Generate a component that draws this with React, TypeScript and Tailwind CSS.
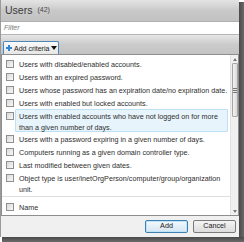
import React from "react";

type Row = { lines: string[]; active?: boolean };

const rows: Row[] = [
  { lines: ["Users with disabled/enabled accounts."] },
  { lines: ["Users with an expired password."] },
  { lines: ["Users whose password has an expiration date/no expiration date."] },
  { lines: ["Users with enabled but locked accounts."] },
  {
    lines: ["Users with enabled accounts who have not logged on for more", "than a given number of days."],
    active: true,
  },
  { lines: ["Users with a password expiring in a given number of days."] },
  { lines: ["Computers running as a given domain controller type."] },
  { lines: ["Last modified between given dates."] },
  { lines: ["Object type is user/inetOrgPerson/computer/group/organization", "unit."] },
];

const Checkbox = () => (
  <span className="block w-[8px] h-[8px] shrink-0 border border-[#8f8f8f] bg-linear-to-br from-[#d9d9d9] to-[#f8f8f8]" />
);

const CriteriaRow = ({ row }: { row: Row }) => {
  const tall = row.lines.length > 1;
  return (
    <div className={`flex items-start pl-[4px] ${tall ? "h-[23px]" : "h-[13px]"}`}>
      <div className={tall ? "pt-[3px]" : "pt-[2.5px]"}>
        <Checkbox />
      </div>
      <div
        className={`ml-[1px] flex-1 mr-[2px] px-[3px] leading-[11px] ${
          tall ? "py-[0.5px] h-[23px]" : "py-[1px]"
        } ${row.active ? "bg-[#e8f4fc] border border-[#bfe0f5] rounded-[1px] px-[2px]" : "border border-transparent"}`}
      >
        {row.lines.map((l) => (
          <div key={l} className="whitespace-nowrap">
            {l}
          </div>
        ))}
      </div>
    </div>
  );
};

export default function App() {
  return (
    <div className="w-[244px] h-[242px] flex flex-col bg-white font-['Liberation_Sans',Arial,sans-serif] text-[#2b2b2b]">
      <div className="flex h-[237px]">
        <div className="w-[239px] flex flex-col border-l border-[#9a9a9a]">
          {/* Header */}
          <div className="h-[22px] flex items-center px-[4px] bg-linear-to-b from-[#e4e4e4] via-[#c9c9c9] to-[#c2c2c2] border-b border-[#b0b0b0]">
            <span className="text-[10.5px] text-[#3c3c3c]">Users</span>
            <span className="text-[7px] text-[#4a4a4a] ml-[5px]">(42)</span>
          </div>

          {/* Filter */}
          <div className="h-[13px] flex items-center px-[3px] bg-white border-b border-[#b5b5b5]">
            <span className="italic text-[7px] text-[#7a7a7a]">Filter</span>
          </div>

          {/* Toolbar */}
          <div className="h-[19px] flex items-end pl-[2px] bg-linear-to-b from-[#e6e6e6] via-[#cbcbcb] to-[#c4c4c4]">
            <div className="h-[13px] w-[56px] flex items-center pl-[2px] pr-[2px] gap-[2px] border border-b-0 border-[#4d86b8] rounded-t-[2px] bg-linear-to-b from-[#fafafa] to-[#e6e6e6]">
              <svg width="6" height="6" viewBox="0 0 6 6" className="shrink-0">
                <path d="M2 0h2v2h2v2H4v2H2V4H0V2h2z" fill="#2f86d6" />
              </svg>
              <span className="text-[7px] text-[#1a1a1a] leading-none whitespace-nowrap">Add criteria</span>
              <svg width="6" height="4" viewBox="0 0 6 4" className="ml-auto shrink-0">
                <path d="M0 0h6L3 4z" fill="#111" />
              </svg>
            </div>
          </div>

          {/* List */}
          <div className="h-[162px] flex border border-[#8e8e8e] bg-white text-[7.2px] text-[#2e2e2e]">
            <div className="flex-1 pt-[2px] overflow-hidden">
              {rows.map((r, i) => (
                <CriteriaRow key={i} row={r} />
              ))}
              <div className="mt-[2px] h-px bg-[#dedede]" />
              <div className="mt-[3px]">
                <CriteriaRow row={{ lines: ["Name"] }} />
              </div>
            </div>
            <div className="w-[8px] flex flex-col bg-[#f0f0f0] border-l border-[#e2e2e2]">
              <div className="h-[8px] flex items-center justify-center">
                <svg width="4" height="3" viewBox="0 0 4 3">
                  <path d="M0 3L2 0l2 3z" fill="#7a7a7a" />
                </svg>
              </div>
              <div className="h-[54px] mx-[0.5px] border border-[#a5a5a5] rounded-[1px] bg-linear-to-r from-[#f2f2f2] to-[#dadada] flex flex-col items-center justify-center gap-[1px]">
                <span className="block w-[4px] h-px bg-[#777]" />
                <span className="block w-[4px] h-px bg-[#777]" />
                <span className="block w-[4px] h-px bg-[#777]" />
              </div>
              <div className="flex-1" />
              <div className="h-[8px] flex items-center justify-center">
                <svg width="4" height="3" viewBox="0 0 4 3">
                  <path d="M0 0h4L2 3z" fill="#7a7a7a" />
                </svg>
              </div>
            </div>
          </div>

          {/* Footer */}
          <div className="h-[21px] flex items-center justify-end gap-[5px] pr-[3px] bg-[#f0f0f0]">
            <button className="w-[43px] h-[13px] text-[7.2px] text-[#1a1a1a] border border-[#3c7fb1] rounded-[2px] bg-linear-to-b from-[#f4f9fd] to-[#d6e6f2] shadow-[inset_0_0_0_1px_#bfe3f9]">
              Add
            </button>
            <button className="w-[43px] h-[13px] text-[7.2px] text-[#1a1a1a] border border-[#7a7a7a] rounded-[2px] bg-linear-to-b from-[#f4f4f4] to-[#dcdcdc]">
              Cancel
            </button>
          </div>
        </div>
        <div className="w-[5px] mt-[2px] bg-linear-to-r from-[#4a4a4a] to-[#6a6a6a]" />
      </div>
      <div className="h-[5px] ml-[2px] bg-linear-to-b from-[#4a4a4a] to-[#6a6a6a]" />
    </div>
  );
}
